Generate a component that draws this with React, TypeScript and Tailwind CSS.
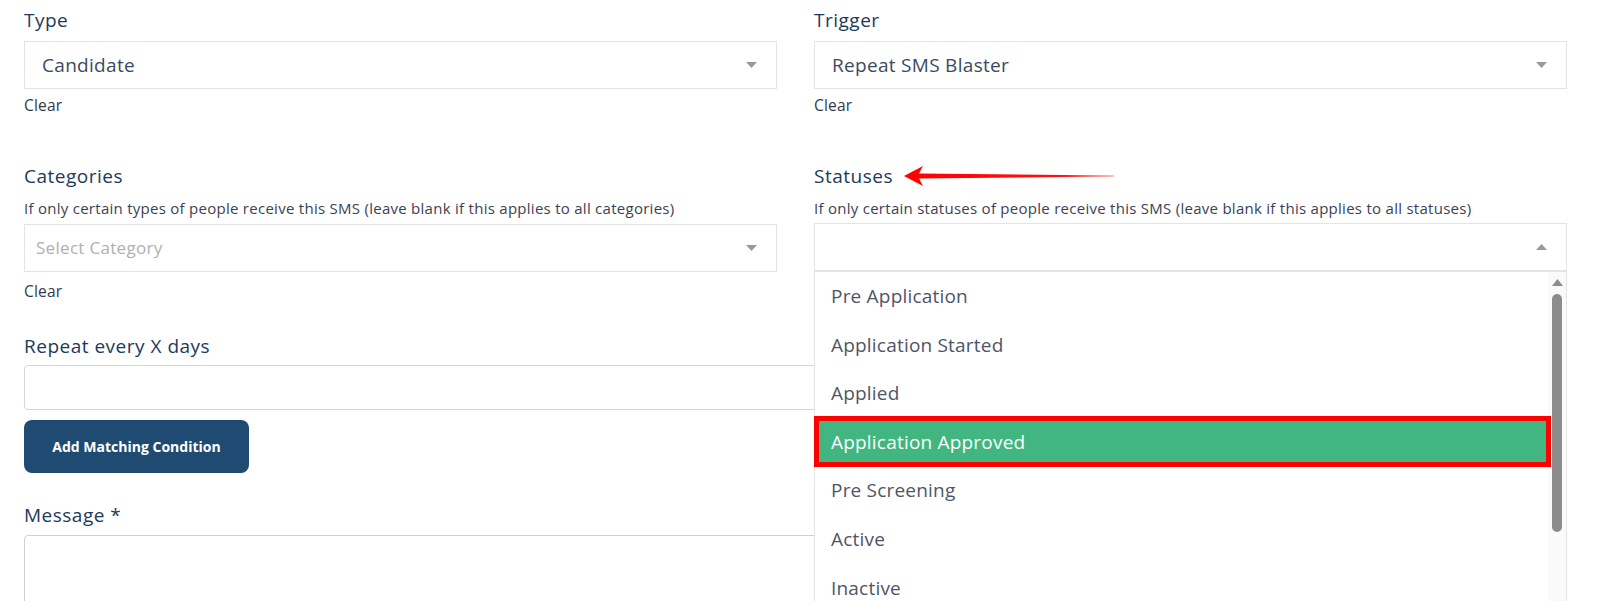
import React from "react";

const font = { fontFamily: '"Open Sans", "Noto Sans", sans-serif' };

function Caret({ up = false }: { up?: boolean }) {
  return (
    <svg width="11" height="6" viewBox="0 0 11 6" className="absolute right-[19px] top-1/2 -translate-y-1/2">
      {up ? <path d="M0 6 L5.5 0 L11 6 Z" fill="#999" /> : <path d="M0 0 L11 0 L5.5 6 Z" fill="#999" />}
    </svg>
  );
}

const options = [
  "Pre Application",
  "Application Started",
  "Applied",
  "Application Approved",
  "Pre Screening",
  "Active",
  "Inactive",
  "Terminated",
];

const label = "h-[24px] leading-[24px] text-[19px] tracking-[0.5px] font-medium text-[#1b3a5c] whitespace-nowrap";
const clear = "h-[20px] leading-[20px] text-[15.5px] tracking-[0.2px] text-[#333a4a]";
const helper = "mt-[10px] h-[20px] leading-[20px] text-[15px] tracking-[0.27px] text-[#3c3f55] whitespace-nowrap";

export default function App() {
  return (
    <div className="w-[1600px] h-[601px] overflow-hidden bg-white relative" style={font}>
      <div className="pl-[24px] pr-[33px] pt-[8px]">
        <div className="grid grid-cols-2 gap-x-[37px]">
          {/* Type */}
          <div className="flex flex-col">
            <div className={label}>Type</div>
            <div className="relative mt-[9px] h-[48px] border border-[#e4e4e4] flex items-center pl-[17px] text-[19px] tracking-[0.3px] text-[#3b4a63]">
              Candidate
              <Caret />
            </div>
            <div className={"mt-[6px] " + clear}>Clear</div>
          </div>
          {/* Trigger */}
          <div className="flex flex-col">
            <div className={label}>Trigger</div>
            <div className="relative mt-[9px] h-[48px] border border-[#e4e4e4] flex items-center pl-[17px] text-[19px] tracking-[0.3px] text-[#3b4a63]">
              Repeat SMS Blaster
              <Caret />
            </div>
            <div className={"mt-[6px] " + clear}>Clear</div>
          </div>
          {/* Categories */}
          <div className="flex flex-col mt-[49px]">
            <div className={label}>Categories</div>
            <div className={helper}>
              If only certain types of people receive this SMS (leave blank if this applies to all categories)
            </div>
            <div className="relative mt-[6px] h-[48px] border border-[#e4e4e4] flex items-center pl-[11px] text-[17px] tracking-[0.3px] text-[#b0b0b0]">
              Select Category
              <Caret />
            </div>
            <div className={"mt-[9px] " + clear}>Clear</div>
          </div>
          {/* Statuses */}
          <div className="flex flex-col mt-[49px] relative z-10">
            <div className={"relative " + label}>
              Statuses
              <svg width="210" height="22" viewBox="0 0 210 22" className="absolute left-[90px] top-[1px]">
                <defs>
                  <linearGradient id="ag" x1="0" y1="0" x2="1" y2="0">
                    <stop offset="0" stopColor="#ff0000" />
                    <stop offset="0.75" stopColor="#ff1010" />
                    <stop offset="1" stopColor="#ff8080" />
                  </linearGradient>
                </defs>
                <path d="M0 11 L19 1 L15 8.5 L210 10.5 L210 11.5 L15 13.5 L19 21 Z" fill="url(#ag)" />
              </svg>
            </div>
            <div className={helper}>
              If only certain statuses of people receive this SMS (leave blank if this applies to all statuses)
            </div>
            <div className="relative mt-[5px] h-[48px] border border-[#e4e4e4] bg-white">
              <Caret up />
              <div className="absolute left-[-1px] right-[-1px] top-[47px] h-[340px] border border-[#e4e4e4] bg-white flex">
                <div className="flex-1 flex flex-col">
                  {options.map((o) =>
                    o === "Application Approved" ? (
                      <div key={o} className="relative h-[48.6px] shrink-0 bg-[#41b681] flex items-center pl-[16px] text-[19px] tracking-[0.2px] text-white">
                        {o}
                        <div className="absolute left-[-1px] right-[-3px] top-[-2px] bottom-[-1px] border-[5px] border-[#ff0000]" />
                      </div>
                    ) : (
                      <div key={o} className="h-[48.6px] shrink-0 flex items-center pl-[16px] text-[19px] tracking-[0.2px] text-[#4f5568]">
                        {o}
                      </div>
                    )
                  )}
                </div>
                <div className="w-[18px] bg-[#fafafa] flex flex-col items-center pt-[7px]">
                  <svg width="11" height="7" viewBox="0 0 11 7">
                    <path d="M0 7 L5.5 0 L11 7 Z" fill="#8c8c8c" />
                  </svg>
                  <div className="mt-[8px] w-[10px] h-[238px] rounded-full bg-[#8c8c8c]" />
                </div>
              </div>
            </div>
          </div>
        </div>

        {/* Repeat */}
        <div className={"mt-[33px] " + label}>Repeat every X days</div>
        <div className="mt-[7px] h-[45px] border border-[#d3d5dc] rounded-[4px]" />
        <button className="mt-[10px] w-[225px] h-[53px] rounded-[8px] bg-[#1f4b73] text-white text-[14px] font-bold">
          Add Matching Condition
        </button>
        <div className={"mt-[30px] " + label}>Message *</div>
        <div className="mt-[8px] h-[150px] border border-[#d0d0d0] rounded-[4px]" />
      </div>
    </div>
  );
}
